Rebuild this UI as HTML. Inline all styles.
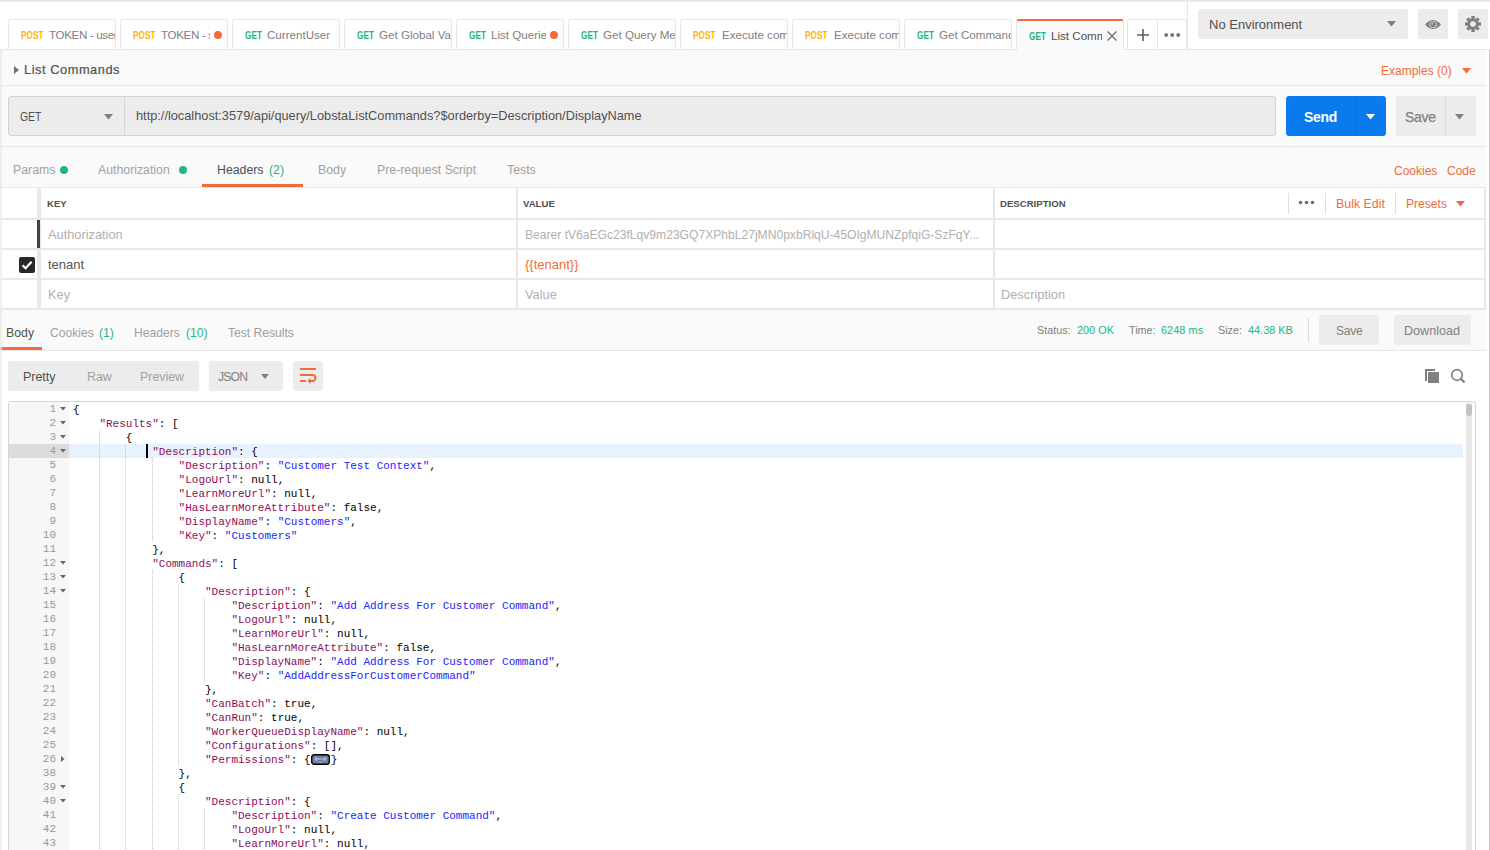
<!DOCTYPE html>
<html><head><meta charset="utf-8">
<style>
*{box-sizing:border-box;margin:0;padding:0}
html,body{width:1490px;height:850px;overflow:hidden}
body{position:relative;background:#fafafa;font-family:"Liberation Sans",sans-serif;color:#505050}
.a{position:absolute}
.t{position:absolute;white-space:pre;line-height:1}
/* top bar */
#topbar{left:0;top:0;width:1490px;height:50px;background:#fff;border-bottom:1px solid #e6e6e6}
#topline{left:0;top:0;width:1490px;height:2px;background:linear-gradient(#e2e2e2,#f4f4f4)}
.tab{position:absolute;top:19px;width:108px;height:30px;border:1px solid #e8e8e8;border-bottom:none;border-radius:3px 3px 0 0;background:#fff;overflow:hidden}
.tab .m{position:absolute;left:12px;top:10px;font-size:10.6px;font-weight:bold;line-height:1;transform:scaleX(0.78);transform-origin:0 0}
.tab .n{position:absolute;top:9px;font-size:11.6px;color:#808080;line-height:1;white-space:pre}
.post{color:#ffb400}
.get{color:#26b47f}
.odot{position:absolute;width:8px;height:8px;border-radius:50%;background:#f26b3a;top:11px;right:5px}
.gbtn{position:absolute;background:#ececec;border-radius:3px}
.line{position:absolute;background:#e6e6e6}

.ln{position:absolute;left:9px;width:47px;text-align:right;font-family:"Liberation Mono",monospace;font-size:11px;line-height:14px;color:#999;height:14px}
.cl{position:absolute;font-family:"Liberation Mono",monospace;font-size:11px;line-height:14px;height:14px;white-space:pre;color:#000}
.cl .k{color:#8c0e58}
.cl .s{color:#2222ff}
.cl .c{color:#000}
.cl .p{color:#000}
.ig{position:absolute;width:1px;height:14px;background:repeating-linear-gradient(#c4c4c4 0 1px,transparent 1px 2px)}
.fw{display:inline-block;vertical-align:top;margin-top:1px;width:19px;height:11px;margin-left:0.5px;margin-right:0.5px}
</style></head>
<body>
<div id="topbar" class="a"></div>
<div id="topline" class="a"></div>

<!-- tabs -->
<div class="tab" style="left:8px"><span class="m post">POST</span><span class="n" style="left:40px;letter-spacing:-0.35px">TOKEN - user</span></div>
<div class="tab" style="left:120px"><span class="m post">POST</span><span class="n" style="left:40px;width:49px;overflow:hidden;letter-spacing:-0.35px">TOKEN - sys</span><span class="odot"></span></div>
<div class="tab" style="left:232px"><span class="m get">GET</span><span class="n" style="left:34px">CurrentUser</span></div>
<div class="tab" style="left:344px"><span class="m get">GET</span><span class="n" style="left:34px">Get Global Variables</span></div>
<div class="tab" style="left:456px"><span class="m get">GET</span><span class="n" style="left:34px;width:55px;overflow:hidden">List Queries</span><span class="odot"></span></div>
<div class="tab" style="left:568px"><span class="m get">GET</span><span class="n" style="left:34px">Get Query Metadata</span></div>
<div class="tab" style="left:680px"><span class="m post">POST</span><span class="n" style="left:41px">Execute command</span></div>
<div class="tab" style="left:792px"><span class="m post">POST</span><span class="n" style="left:41px">Execute command</span></div>
<div class="tab" style="left:904px"><span class="m get">GET</span><span class="n" style="left:34px">Get Command Metadata</span></div>
<div class="tab" style="left:1016px;background:#fafafa;border-top:2px solid #f26b3a;height:31px"><span class="m get" style="top:10px">GET</span><span class="n" style="left:34px;top:9px;color:#505050;width:51px;overflow:hidden">List Commands</span>
  <svg class="a" style="left:89px;top:9px" width="12" height="12" viewBox="0 0 12 12"><path d="M1.5 1.5L10.5 10.5M10.5 1.5L1.5 10.5" stroke="#707070" stroke-width="1.4"/></svg></div>
<div class="tab" style="left:1127px;width:60px">
  <div class="a" style="left:29px;top:0;width:1px;height:31px;background:#e8e8e8"></div>
  <svg class="a" style="left:8px;top:8px" width="14" height="14" viewBox="0 0 14 14"><path d="M7 1V13M1 7H13" stroke="#606060" stroke-width="1.6"/></svg>
  <svg class="a" style="left:36px;top:12px" width="17" height="6" viewBox="0 0 17 6"><circle cx="2.2" cy="3" r="2" fill="#7a7a7a"/><circle cx="8.2" cy="3" r="2" fill="#7a7a7a"/><circle cx="14.2" cy="3" r="2" fill="#7a7a7a"/></svg>
</div>
<div class="a" style="left:1187px;top:0;width:1px;height:49px;background:#e6e6e6"></div>

<!-- env -->
<div class="gbtn" style="left:1198px;top:9px;width:210px;height:30px"></div>
<span class="t" style="left:1209px;top:18px;font-size:13px;color:#505050">No Environment</span>
<svg class="a" style="left:1387px;top:21px" width="9" height="6" viewBox="0 0 9 6"><path d="M0 0H9L4.5 5.5Z" fill="#808080"/></svg>
<div class="gbtn" style="left:1418px;top:9px;width:30px;height:30px"></div>
<svg class="a" style="left:1424px;top:19px" width="18" height="11" viewBox="0 0 18 11"><path d="M1 5.5Q9 -3.5 17 5.5Q9 14.5 1 5.5Z" fill="#808080"/><circle cx="9" cy="5.5" r="3.6" fill="#ececec"/><circle cx="9" cy="5.5" r="2.9" fill="#808080"/><path d="M9 5.5V3.6A1.9 1.9 0 0 0 7.1 5.5Z" fill="#ececec" opacity="0.6"/></svg>
<div class="gbtn" style="left:1458px;top:9px;width:30px;height:30px"></div>
<svg class="a" style="left:1465px;top:16px" width="16" height="16" viewBox="0 0 16 16"><g fill="#808080" transform="translate(8 8)"><circle r="5.8"/><rect x="-1.7" y="-8" width="3.4" height="4" transform="rotate(0)"/><rect x="-1.7" y="-8" width="3.4" height="4" transform="rotate(45)"/><rect x="-1.7" y="-8" width="3.4" height="4" transform="rotate(90)"/><rect x="-1.7" y="-8" width="3.4" height="4" transform="rotate(135)"/><rect x="-1.7" y="-8" width="3.4" height="4" transform="rotate(180)"/><rect x="-1.7" y="-8" width="3.4" height="4" transform="rotate(225)"/><rect x="-1.7" y="-8" width="3.4" height="4" transform="rotate(270)"/><rect x="-1.7" y="-8" width="3.4" height="4" transform="rotate(315)"/></g><circle cx="8" cy="8" r="2.8" fill="#ececec"/></svg>

<!-- title row -->
<div class="line" style="left:0;top:85px;width:1486px;height:1px"></div>
<div class="a" style="left:0;top:50px;width:2px;height:800px;background:#efefef"></div>
<svg class="a" style="left:14px;top:66px" width="5" height="8" viewBox="0 0 5 8"><path d="M0 0L5 4L0 8Z" fill="#707070"/></svg>
<span class="t" style="left:24px;top:64px;font-size:12.8px;letter-spacing:0.55px;color:#505050;-webkit-text-stroke:0.2px #505050">List Commands</span>
<span class="t" style="left:1381px;top:65px;font-size:12px;color:#f26b3a">Examples (0)</span>
<svg class="a" style="left:1462px;top:68px" width="9" height="6" viewBox="0 0 9 6"><path d="M0 0H9L4.5 5.5Z" fill="#f26b3a"/></svg>

<!-- url row -->
<div class="a" style="left:8px;top:96px;width:1268px;height:40px;background:#ececec;border:1px solid #d2d2d2;border-radius:3px"></div>
<div class="a" style="left:124px;top:97px;width:1px;height:38px;background:#d6d6d6"></div>
<span class="t" style="left:20px;top:111px;font-size:12.4px;color:#505050;transform:scaleX(0.84);transform-origin:0 0">GET</span>
<svg class="a" style="left:104px;top:114px" width="9" height="6" viewBox="0 0 9 6"><path d="M0 0H9L4.5 5.5Z" fill="#808080"/></svg>
<span class="t" style="left:136px;top:110px;font-size:12.78px;color:#505050">http://localhost:3579/api/query/LobstaListCommands?$orderby=Description/DisplayName</span>
<div class="a" style="left:1286px;top:96px;width:100px;height:40px;background:#097bed;border-radius:3px"></div>
<div class="a" style="left:1355px;top:96px;width:1px;height:40px;background:#0a6fd6"></div>
<span class="t" style="left:1304px;top:110px;font-size:14px;letter-spacing:-0.3px;font-weight:bold;color:#fff">Send</span>
<svg class="a" style="left:1366px;top:114px" width="9" height="6" viewBox="0 0 9 6"><path d="M0 0H9L4.5 5.5Z" fill="#fff"/></svg>
<div class="gbtn" style="left:1396px;top:96px;width:80px;height:40px"></div>
<div class="a" style="left:1445px;top:96px;width:1px;height:40px;background:#dcdcdc"></div>
<span class="t" style="left:1405px;top:110px;font-size:14px;letter-spacing:-0.3px;color:#808080;-webkit-text-stroke:0.25px #808080">Save</span>
<svg class="a" style="left:1455px;top:114px" width="9" height="6" viewBox="0 0 9 6"><path d="M0 0H9L4.5 5.5Z" fill="#808080"/></svg>
<div class="line" style="left:0;top:146px;width:1486px;height:1px"></div>

<!-- request tabs -->
<span class="t" style="left:13px;top:164px;font-size:12.3px;color:#a0a0a0">Params</span>
<div class="a" style="left:60px;top:166px;width:8px;height:8px;border-radius:50%;background:#26b47f"></div>
<span class="t" style="left:98px;top:164px;font-size:12.3px;color:#a0a0a0">Authorization</span>
<div class="a" style="left:179px;top:166px;width:8px;height:8px;border-radius:50%;background:#26b47f"></div>
<span class="t" style="left:217px;top:164px;font-size:12.3px;color:#505050">Headers</span>
<span class="t" style="left:269px;top:164px;font-size:12.3px;color:#26b47f">(2)</span>
<div class="a" style="left:202px;top:184px;width:101px;height:3px;background:#f26b3a"></div>
<span class="t" style="left:318px;top:164px;font-size:12.3px;color:#a0a0a0">Body</span>
<span class="t" style="left:377px;top:164px;font-size:12.3px;color:#a0a0a0">Pre-request Script</span>
<span class="t" style="left:507px;top:164px;font-size:12.3px;color:#a0a0a0">Tests</span>
<span class="t" style="left:1394px;top:165px;font-size:12px;color:#f26b3a">Cookies</span>
<span class="t" style="left:1447px;top:165px;font-size:12px;color:#f26b3a">Code</span>
<div class="line" style="left:0;top:187px;width:1486px;height:1px"></div>

<!-- headers table -->
<div class="a" style="left:0;top:188px;width:1486px;height:121px;background:#fff"></div>
<div class="a" style="left:0;top:187px;width:1486px;height:1px;background:#e8e8e8"></div>
<div class="a" style="left:0;top:218px;width:1486px;height:2px;background:#e8e8e8"></div>
<div class="a" style="left:0;top:248px;width:1486px;height:2px;background:#e8e8e8"></div>
<div class="a" style="left:0;top:278px;width:1486px;height:2px;background:#e8e8e8"></div>
<div class="a" style="left:0;top:308px;width:1486px;height:2px;background:#e8e8e8"></div>
<div class="a" style="left:37px;top:188px;width:4px;height:120px;background:#e8e8e8"></div>
<div class="a" style="left:516px;top:188px;width:2px;height:120px;background:#e8e8e8"></div>
<div class="a" style="left:993px;top:188px;width:2px;height:120px;background:#e8e8e8"></div>
<div class="a" style="left:1484px;top:188px;width:2px;height:120px;background:#e8e8e8"></div>
<div class="a" style="left:37px;top:220px;width:3px;height:28px;background:#444"></div>
<span class="t" style="left:47px;top:199px;font-size:9.6px;font-weight:bold;color:#505050">KEY</span>
<span class="t" style="left:523px;top:199px;font-size:9.6px;font-weight:bold;color:#505050">VALUE</span>
<span class="t" style="left:1000px;top:199px;font-size:9.6px;font-weight:bold;color:#505050">DESCRIPTION</span>
<div class="a" style="left:1288px;top:193px;width:1px;height:21px;background:#e0e0e0"></div>
<svg class="a" style="left:1298px;top:200px" width="17" height="5" viewBox="0 0 17 5"><circle cx="2.5" cy="2.5" r="1.8" fill="#707070"/><circle cx="8.5" cy="2.5" r="1.8" fill="#707070"/><circle cx="14.5" cy="2.5" r="1.8" fill="#707070"/></svg>
<div class="a" style="left:1325px;top:193px;width:1px;height:21px;background:#e0e0e0"></div>
<span class="t" style="left:1336px;top:198px;font-size:12.4px;color:#f26b3a">Bulk Edit</span>
<div class="a" style="left:1395px;top:193px;width:1px;height:21px;background:#e0e0e0"></div>
<span class="t" style="left:1406px;top:198px;font-size:12.1px;color:#f26b3a">Presets</span>
<svg class="a" style="left:1456px;top:201px" width="9" height="6" viewBox="0 0 9 6"><path d="M0 0H9L4.5 5.5Z" fill="#f26b3a"/></svg>
<span class="t" style="left:48px;top:229px;font-size:12.8px;color:#b0b0b0">Authorization</span>
<span class="t" style="left:525px;top:229px;font-size:12.1px;color:#b0b0b0">Bearer tV6aEGc23fLqv9m23GQ7XPhbL27jMN0pxbRlqU-45OIgMUNZpfqiG-SzFqY...</span>
<div class="a" style="left:19px;top:257px;width:16px;height:16px;background:#282828;border-radius:2px"></div>
<svg class="a" style="left:19px;top:257px" width="16" height="16" viewBox="0 0 16 16"><path d="M3.5 8.2L6.6 11.2L12.6 4.8" stroke="#fff" stroke-width="2.2" fill="none"/></svg>
<span class="t" style="left:48px;top:258px;font-size:13px;color:#555">tenant</span>
<span class="t" style="left:525px;top:258px;font-size:13px;color:#f26b3a">{{tenant}}</span>
<span class="t" style="left:48px;top:289px;font-size:12.8px;color:#b0b0b0">Key</span>
<span class="t" style="left:525px;top:289px;font-size:12.8px;color:#b0b0b0">Value</span>
<span class="t" style="left:1001px;top:289px;font-size:12.8px;color:#b0b0b0">Description</span>

<!-- response tabs -->
<span class="t" style="left:6px;top:327px;font-size:12.3px;color:#505050">Body</span>
<div class="a" style="left:0;top:347px;width:42px;height:3px;background:#f26b3a"></div>
<span class="t" style="left:50px;top:327px;font-size:12.1px;color:#a0a0a0">Cookies</span>
<span class="t" style="left:99px;top:327px;font-size:12.1px;color:#26b47f">(1)</span>
<span class="t" style="left:134px;top:327px;font-size:12.1px;color:#a0a0a0">Headers</span>
<span class="t" style="left:186px;top:327px;font-size:12.1px;color:#26b47f">(10)</span>
<span class="t" style="left:228px;top:327px;font-size:12.1px;color:#a0a0a0">Test Results</span>
<span class="t" style="left:1037px;top:325px;font-size:10.8px;color:#808080">Status:</span>
<span class="t" style="left:1077px;top:325px;font-size:10.9px;color:#26b47f">200 OK</span>
<span class="t" style="left:1129px;top:325px;font-size:10.8px;color:#808080">Time:</span>
<span class="t" style="left:1161px;top:325px;font-size:11px;color:#26b47f">6248 ms</span>
<span class="t" style="left:1218px;top:325px;font-size:10.8px;color:#808080">Size:</span>
<span class="t" style="left:1248px;top:325px;font-size:10.9px;color:#26b47f">44.38 KB</span>
<div class="a" style="left:1308px;top:318px;width:1px;height:24px;background:#dcdcdc"></div>
<div class="gbtn" style="left:1319px;top:315px;width:60px;height:30px"></div>
<span class="t" style="left:1336px;top:325px;font-size:12px;letter-spacing:-0.2px;color:#808080">Save</span>
<div class="gbtn" style="left:1394px;top:315px;width:77px;height:30px"></div>
<span class="t" style="left:1404px;top:325px;font-size:12.6px;color:#808080">Download</span>
<div class="line" style="left:0;top:350px;width:1486px;height:1px"></div>

<!-- response body -->
<div class="a" style="left:0;top:351px;width:1486px;height:499px;background:#fff"></div>
<div class="a" style="left:0;top:50px;width:3px;height:800px;background:linear-gradient(to right,#ececec,rgba(236,236,236,0))"></div>
<div class="a" style="left:1486px;top:50px;width:3px;height:800px;background:#fff"></div>
<div class="a" style="left:1489px;top:50px;width:1px;height:800px;background:#c8c8c8"></div>
<div class="gbtn" style="left:8px;top:361px;width:191px;height:30px"></div>
<span class="t" style="left:23px;top:371px;font-size:12.4px;color:#505050">Pretty</span>
<span class="t" style="left:87px;top:371px;font-size:12.4px;color:#a0a0a0">Raw</span>
<span class="t" style="left:140px;top:371px;font-size:12.4px;color:#a0a0a0">Preview</span>
<div class="gbtn" style="left:209px;top:361px;width:74px;height:30px"></div>
<span class="t" style="left:218px;top:371px;font-size:12.2px;letter-spacing:-0.8px;color:#808080">JSON</span>
<svg class="a" style="left:261px;top:374px" width="8" height="5" viewBox="0 0 8 5"><path d="M0 0H8L4 5Z" fill="#808080"/></svg>
<div class="gbtn" style="left:293px;top:361px;width:30px;height:30px"></div>
<svg class="a" style="left:299px;top:367px" width="18" height="18" viewBox="0 0 18 18"><path d="M1 2H17M1 8H13.5A3 3 0 0 1 13.5 14H10M1 14H7" stroke="#f26b3a" stroke-width="2" fill="none"/><path d="M8.5 14L11.5 11V17Z" fill="#f26b3a"/></svg>
<svg class="a" style="left:1424px;top:368px" width="16" height="16" viewBox="0 0 16 16"><path d="M2 13V2H11" stroke="#808080" stroke-width="2" fill="none"/><rect x="4" y="4" width="11" height="11" fill="#808080"/></svg>
<svg class="a" style="left:1449px;top:367px" width="18" height="18" viewBox="0 0 18 18"><circle cx="8" cy="8" r="5.3" stroke="#808080" stroke-width="1.7" fill="none"/><path d="M11.8 11.8L15.5 15.5" stroke="#808080" stroke-width="2.2"/></svg>

<!-- CODE -->
<div class="a" style="left:8px;top:401px;width:1468px;height:460px;border:1px solid #d4d4d4;border-radius:3px;background:#fff"></div>
<div class="a" style="left:9px;top:402px;width:60px;height:448px;background:#f7f7f7"></div>
<div class="a" style="left:9px;top:444px;width:60px;height:14px;background:#dcdcdc"></div>
<div class="a" style="left:69px;top:444px;width:1394px;height:14px;background:#e8f2fe"></div>
<span class="ln" style="top:402px">1</span>
<svg class="a" style="left:60px;top:407px" width="6" height="4" viewBox="0 0 6 4"><path d="M0 0H6L3 3.5Z" fill="#666"/></svg>
<div class="cl" style="top:403px;left:73.0px"><span class="p">{</span></div>
<span class="ln" style="top:416px">2</span>
<svg class="a" style="left:60px;top:421px" width="6" height="4" viewBox="0 0 6 4"><path d="M0 0H6L3 3.5Z" fill="#666"/></svg>
<div class="cl" style="top:417px;left:99.4px"><span class="k">&quot;Results&quot;</span><span class="p">:</span><span class="p"> [</span></div>
<span class="ln" style="top:430px">3</span>
<svg class="a" style="left:60px;top:435px" width="6" height="4" viewBox="0 0 6 4"><path d="M0 0H6L3 3.5Z" fill="#666"/></svg>
<div class="ig" style="left:98.7px;top:430px"></div>
<div class="cl" style="top:431px;left:125.8px"><span class="p">{</span></div>
<span class="ln" style="top:444px">4</span>
<svg class="a" style="left:60px;top:449px" width="6" height="4" viewBox="0 0 6 4"><path d="M0 0H6L3 3.5Z" fill="#666"/></svg>
<div class="ig" style="left:98.7px;top:444px"></div>
<div class="ig" style="left:125.1px;top:444px"></div>
<div class="cl" style="top:445px;left:152.2px"><span class="k">&quot;Description&quot;</span><span class="p">:</span><span class="p"> {</span></div>
<span class="ln" style="top:458px">5</span>
<div class="ig" style="left:98.7px;top:458px"></div>
<div class="ig" style="left:125.1px;top:458px"></div>
<div class="ig" style="left:151.5px;top:458px"></div>
<div class="cl" style="top:459px;left:178.6px"><span class="k">&quot;Description&quot;</span><span class="p">:</span><span class="p"> </span><span class="s">&quot;Customer Test Context&quot;</span><span class="p">,</span></div>
<span class="ln" style="top:472px">6</span>
<div class="ig" style="left:98.7px;top:472px"></div>
<div class="ig" style="left:125.1px;top:472px"></div>
<div class="ig" style="left:151.5px;top:472px"></div>
<div class="cl" style="top:473px;left:178.6px"><span class="k">&quot;LogoUrl&quot;</span><span class="p">:</span><span class="p"> </span><span class="c">null</span><span class="p">,</span></div>
<span class="ln" style="top:486px">7</span>
<div class="ig" style="left:98.7px;top:486px"></div>
<div class="ig" style="left:125.1px;top:486px"></div>
<div class="ig" style="left:151.5px;top:486px"></div>
<div class="cl" style="top:487px;left:178.6px"><span class="k">&quot;LearnMoreUrl&quot;</span><span class="p">:</span><span class="p"> </span><span class="c">null</span><span class="p">,</span></div>
<span class="ln" style="top:500px">8</span>
<div class="ig" style="left:98.7px;top:500px"></div>
<div class="ig" style="left:125.1px;top:500px"></div>
<div class="ig" style="left:151.5px;top:500px"></div>
<div class="cl" style="top:501px;left:178.6px"><span class="k">&quot;HasLearnMoreAttribute&quot;</span><span class="p">:</span><span class="p"> </span><span class="c">false</span><span class="p">,</span></div>
<span class="ln" style="top:514px">9</span>
<div class="ig" style="left:98.7px;top:514px"></div>
<div class="ig" style="left:125.1px;top:514px"></div>
<div class="ig" style="left:151.5px;top:514px"></div>
<div class="cl" style="top:515px;left:178.6px"><span class="k">&quot;DisplayName&quot;</span><span class="p">:</span><span class="p"> </span><span class="s">&quot;Customers&quot;</span><span class="p">,</span></div>
<span class="ln" style="top:528px">10</span>
<div class="ig" style="left:98.7px;top:528px"></div>
<div class="ig" style="left:125.1px;top:528px"></div>
<div class="ig" style="left:151.5px;top:528px"></div>
<div class="cl" style="top:529px;left:178.6px"><span class="k">&quot;Key&quot;</span><span class="p">:</span><span class="p"> </span><span class="s">&quot;Customers&quot;</span></div>
<span class="ln" style="top:542px">11</span>
<div class="ig" style="left:98.7px;top:542px"></div>
<div class="ig" style="left:125.1px;top:542px"></div>
<div class="cl" style="top:543px;left:152.2px"><span class="p">},</span></div>
<span class="ln" style="top:556px">12</span>
<svg class="a" style="left:60px;top:561px" width="6" height="4" viewBox="0 0 6 4"><path d="M0 0H6L3 3.5Z" fill="#666"/></svg>
<div class="ig" style="left:98.7px;top:556px"></div>
<div class="ig" style="left:125.1px;top:556px"></div>
<div class="cl" style="top:557px;left:152.2px"><span class="k">&quot;Commands&quot;</span><span class="p">:</span><span class="p"> [</span></div>
<span class="ln" style="top:570px">13</span>
<svg class="a" style="left:60px;top:575px" width="6" height="4" viewBox="0 0 6 4"><path d="M0 0H6L3 3.5Z" fill="#666"/></svg>
<div class="ig" style="left:98.7px;top:570px"></div>
<div class="ig" style="left:125.1px;top:570px"></div>
<div class="ig" style="left:151.5px;top:570px"></div>
<div class="cl" style="top:571px;left:178.6px"><span class="p">{</span></div>
<span class="ln" style="top:584px">14</span>
<svg class="a" style="left:60px;top:589px" width="6" height="4" viewBox="0 0 6 4"><path d="M0 0H6L3 3.5Z" fill="#666"/></svg>
<div class="ig" style="left:98.7px;top:584px"></div>
<div class="ig" style="left:125.1px;top:584px"></div>
<div class="ig" style="left:151.5px;top:584px"></div>
<div class="ig" style="left:177.9px;top:584px"></div>
<div class="cl" style="top:585px;left:205.0px"><span class="k">&quot;Description&quot;</span><span class="p">:</span><span class="p"> {</span></div>
<span class="ln" style="top:598px">15</span>
<div class="ig" style="left:98.7px;top:598px"></div>
<div class="ig" style="left:125.1px;top:598px"></div>
<div class="ig" style="left:151.5px;top:598px"></div>
<div class="ig" style="left:177.9px;top:598px"></div>
<div class="ig" style="left:204.3px;top:598px"></div>
<div class="cl" style="top:599px;left:231.4px"><span class="k">&quot;Description&quot;</span><span class="p">:</span><span class="p"> </span><span class="s">&quot;Add Address For Customer Command&quot;</span><span class="p">,</span></div>
<span class="ln" style="top:612px">16</span>
<div class="ig" style="left:98.7px;top:612px"></div>
<div class="ig" style="left:125.1px;top:612px"></div>
<div class="ig" style="left:151.5px;top:612px"></div>
<div class="ig" style="left:177.9px;top:612px"></div>
<div class="ig" style="left:204.3px;top:612px"></div>
<div class="cl" style="top:613px;left:231.4px"><span class="k">&quot;LogoUrl&quot;</span><span class="p">:</span><span class="p"> </span><span class="c">null</span><span class="p">,</span></div>
<span class="ln" style="top:626px">17</span>
<div class="ig" style="left:98.7px;top:626px"></div>
<div class="ig" style="left:125.1px;top:626px"></div>
<div class="ig" style="left:151.5px;top:626px"></div>
<div class="ig" style="left:177.9px;top:626px"></div>
<div class="ig" style="left:204.3px;top:626px"></div>
<div class="cl" style="top:627px;left:231.4px"><span class="k">&quot;LearnMoreUrl&quot;</span><span class="p">:</span><span class="p"> </span><span class="c">null</span><span class="p">,</span></div>
<span class="ln" style="top:640px">18</span>
<div class="ig" style="left:98.7px;top:640px"></div>
<div class="ig" style="left:125.1px;top:640px"></div>
<div class="ig" style="left:151.5px;top:640px"></div>
<div class="ig" style="left:177.9px;top:640px"></div>
<div class="ig" style="left:204.3px;top:640px"></div>
<div class="cl" style="top:641px;left:231.4px"><span class="k">&quot;HasLearnMoreAttribute&quot;</span><span class="p">:</span><span class="p"> </span><span class="c">false</span><span class="p">,</span></div>
<span class="ln" style="top:654px">19</span>
<div class="ig" style="left:98.7px;top:654px"></div>
<div class="ig" style="left:125.1px;top:654px"></div>
<div class="ig" style="left:151.5px;top:654px"></div>
<div class="ig" style="left:177.9px;top:654px"></div>
<div class="ig" style="left:204.3px;top:654px"></div>
<div class="cl" style="top:655px;left:231.4px"><span class="k">&quot;DisplayName&quot;</span><span class="p">:</span><span class="p"> </span><span class="s">&quot;Add Address For Customer Command&quot;</span><span class="p">,</span></div>
<span class="ln" style="top:668px">20</span>
<div class="ig" style="left:98.7px;top:668px"></div>
<div class="ig" style="left:125.1px;top:668px"></div>
<div class="ig" style="left:151.5px;top:668px"></div>
<div class="ig" style="left:177.9px;top:668px"></div>
<div class="ig" style="left:204.3px;top:668px"></div>
<div class="cl" style="top:669px;left:231.4px"><span class="k">&quot;Key&quot;</span><span class="p">:</span><span class="p"> </span><span class="s">&quot;AddAddressForCustomerCommand&quot;</span></div>
<span class="ln" style="top:682px">21</span>
<div class="ig" style="left:98.7px;top:682px"></div>
<div class="ig" style="left:125.1px;top:682px"></div>
<div class="ig" style="left:151.5px;top:682px"></div>
<div class="ig" style="left:177.9px;top:682px"></div>
<div class="cl" style="top:683px;left:205.0px"><span class="p">},</span></div>
<span class="ln" style="top:696px">22</span>
<div class="ig" style="left:98.7px;top:696px"></div>
<div class="ig" style="left:125.1px;top:696px"></div>
<div class="ig" style="left:151.5px;top:696px"></div>
<div class="ig" style="left:177.9px;top:696px"></div>
<div class="cl" style="top:697px;left:205.0px"><span class="k">&quot;CanBatch&quot;</span><span class="p">:</span><span class="p"> </span><span class="c">true</span><span class="p">,</span></div>
<span class="ln" style="top:710px">23</span>
<div class="ig" style="left:98.7px;top:710px"></div>
<div class="ig" style="left:125.1px;top:710px"></div>
<div class="ig" style="left:151.5px;top:710px"></div>
<div class="ig" style="left:177.9px;top:710px"></div>
<div class="cl" style="top:711px;left:205.0px"><span class="k">&quot;CanRun&quot;</span><span class="p">:</span><span class="p"> </span><span class="c">true</span><span class="p">,</span></div>
<span class="ln" style="top:724px">24</span>
<div class="ig" style="left:98.7px;top:724px"></div>
<div class="ig" style="left:125.1px;top:724px"></div>
<div class="ig" style="left:151.5px;top:724px"></div>
<div class="ig" style="left:177.9px;top:724px"></div>
<div class="cl" style="top:725px;left:205.0px"><span class="k">&quot;WorkerQueueDisplayName&quot;</span><span class="p">:</span><span class="p"> </span><span class="c">null</span><span class="p">,</span></div>
<span class="ln" style="top:738px">25</span>
<div class="ig" style="left:98.7px;top:738px"></div>
<div class="ig" style="left:125.1px;top:738px"></div>
<div class="ig" style="left:151.5px;top:738px"></div>
<div class="ig" style="left:177.9px;top:738px"></div>
<div class="cl" style="top:739px;left:205.0px"><span class="k">&quot;Configurations&quot;</span><span class="p">:</span><span class="p"> [],</span></div>
<span class="ln" style="top:752px">26</span>
<svg class="a" style="left:61px;top:756px" width="4" height="6" viewBox="0 0 4 6"><path d="M0 0V6L3.5 3Z" fill="#666"/></svg>
<div class="ig" style="left:98.7px;top:752px"></div>
<div class="ig" style="left:125.1px;top:752px"></div>
<div class="ig" style="left:151.5px;top:752px"></div>
<div class="ig" style="left:177.9px;top:752px"></div>
<div class="cl" style="top:753px;left:205.0px"><span class="k">&quot;Permissions&quot;</span><span class="p">:</span><span class="p"> {</span><svg class="fw" width="19" height="11" viewBox="0 0 19 11"><rect x="0.7" y="0.7" width="17.6" height="9.6" rx="2.5" fill="#6f7fa3" stroke="#000" stroke-width="1.4"/><path d="M4 5H15M6 3L4 5L6 7M13 3L15 5L13 7" stroke="#c8d0e4" stroke-width="0.9" fill="none"/><path d="M7.5 8.2h1M9 8.2h1M10.5 8.2h1" stroke="#c8d0e4" stroke-width="0.9"/></svg><span class="p">}</span></div>
<span class="ln" style="top:766px">38</span>
<div class="ig" style="left:98.7px;top:766px"></div>
<div class="ig" style="left:125.1px;top:766px"></div>
<div class="ig" style="left:151.5px;top:766px"></div>
<div class="cl" style="top:767px;left:178.6px"><span class="p">},</span></div>
<span class="ln" style="top:780px">39</span>
<svg class="a" style="left:60px;top:785px" width="6" height="4" viewBox="0 0 6 4"><path d="M0 0H6L3 3.5Z" fill="#666"/></svg>
<div class="ig" style="left:98.7px;top:780px"></div>
<div class="ig" style="left:125.1px;top:780px"></div>
<div class="ig" style="left:151.5px;top:780px"></div>
<div class="cl" style="top:781px;left:178.6px"><span class="p">{</span></div>
<span class="ln" style="top:794px">40</span>
<svg class="a" style="left:60px;top:799px" width="6" height="4" viewBox="0 0 6 4"><path d="M0 0H6L3 3.5Z" fill="#666"/></svg>
<div class="ig" style="left:98.7px;top:794px"></div>
<div class="ig" style="left:125.1px;top:794px"></div>
<div class="ig" style="left:151.5px;top:794px"></div>
<div class="ig" style="left:177.9px;top:794px"></div>
<div class="cl" style="top:795px;left:205.0px"><span class="k">&quot;Description&quot;</span><span class="p">:</span><span class="p"> {</span></div>
<span class="ln" style="top:808px">41</span>
<div class="ig" style="left:98.7px;top:808px"></div>
<div class="ig" style="left:125.1px;top:808px"></div>
<div class="ig" style="left:151.5px;top:808px"></div>
<div class="ig" style="left:177.9px;top:808px"></div>
<div class="ig" style="left:204.3px;top:808px"></div>
<div class="cl" style="top:809px;left:231.4px"><span class="k">&quot;Description&quot;</span><span class="p">:</span><span class="p"> </span><span class="s">&quot;Create Customer Command&quot;</span><span class="p">,</span></div>
<span class="ln" style="top:822px">42</span>
<div class="ig" style="left:98.7px;top:822px"></div>
<div class="ig" style="left:125.1px;top:822px"></div>
<div class="ig" style="left:151.5px;top:822px"></div>
<div class="ig" style="left:177.9px;top:822px"></div>
<div class="ig" style="left:204.3px;top:822px"></div>
<div class="cl" style="top:823px;left:231.4px"><span class="k">&quot;LogoUrl&quot;</span><span class="p">:</span><span class="p"> </span><span class="c">null</span><span class="p">,</span></div>
<span class="ln" style="top:836px">43</span>
<div class="ig" style="left:98.7px;top:836px"></div>
<div class="ig" style="left:125.1px;top:836px"></div>
<div class="ig" style="left:151.5px;top:836px"></div>
<div class="ig" style="left:177.9px;top:836px"></div>
<div class="ig" style="left:204.3px;top:836px"></div>
<div class="cl" style="top:837px;left:231.4px"><span class="k">&quot;LearnMoreUrl&quot;</span><span class="p">:</span><span class="p"> </span><span class="c">null</span><span class="p">,</span></div>
<div class="a" style="left:146px;top:444px;width:2px;height:14px;background:#000"></div>
<div class="a" style="left:1466px;top:403px;width:6px;height:447px;background:#e8e8e8"></div>
<div class="a" style="left:1466px;top:404px;width:6px;height:12px;background:#c2c2c2;border-radius:3px"></div>
<!-- /CODE -->
</body></html>
